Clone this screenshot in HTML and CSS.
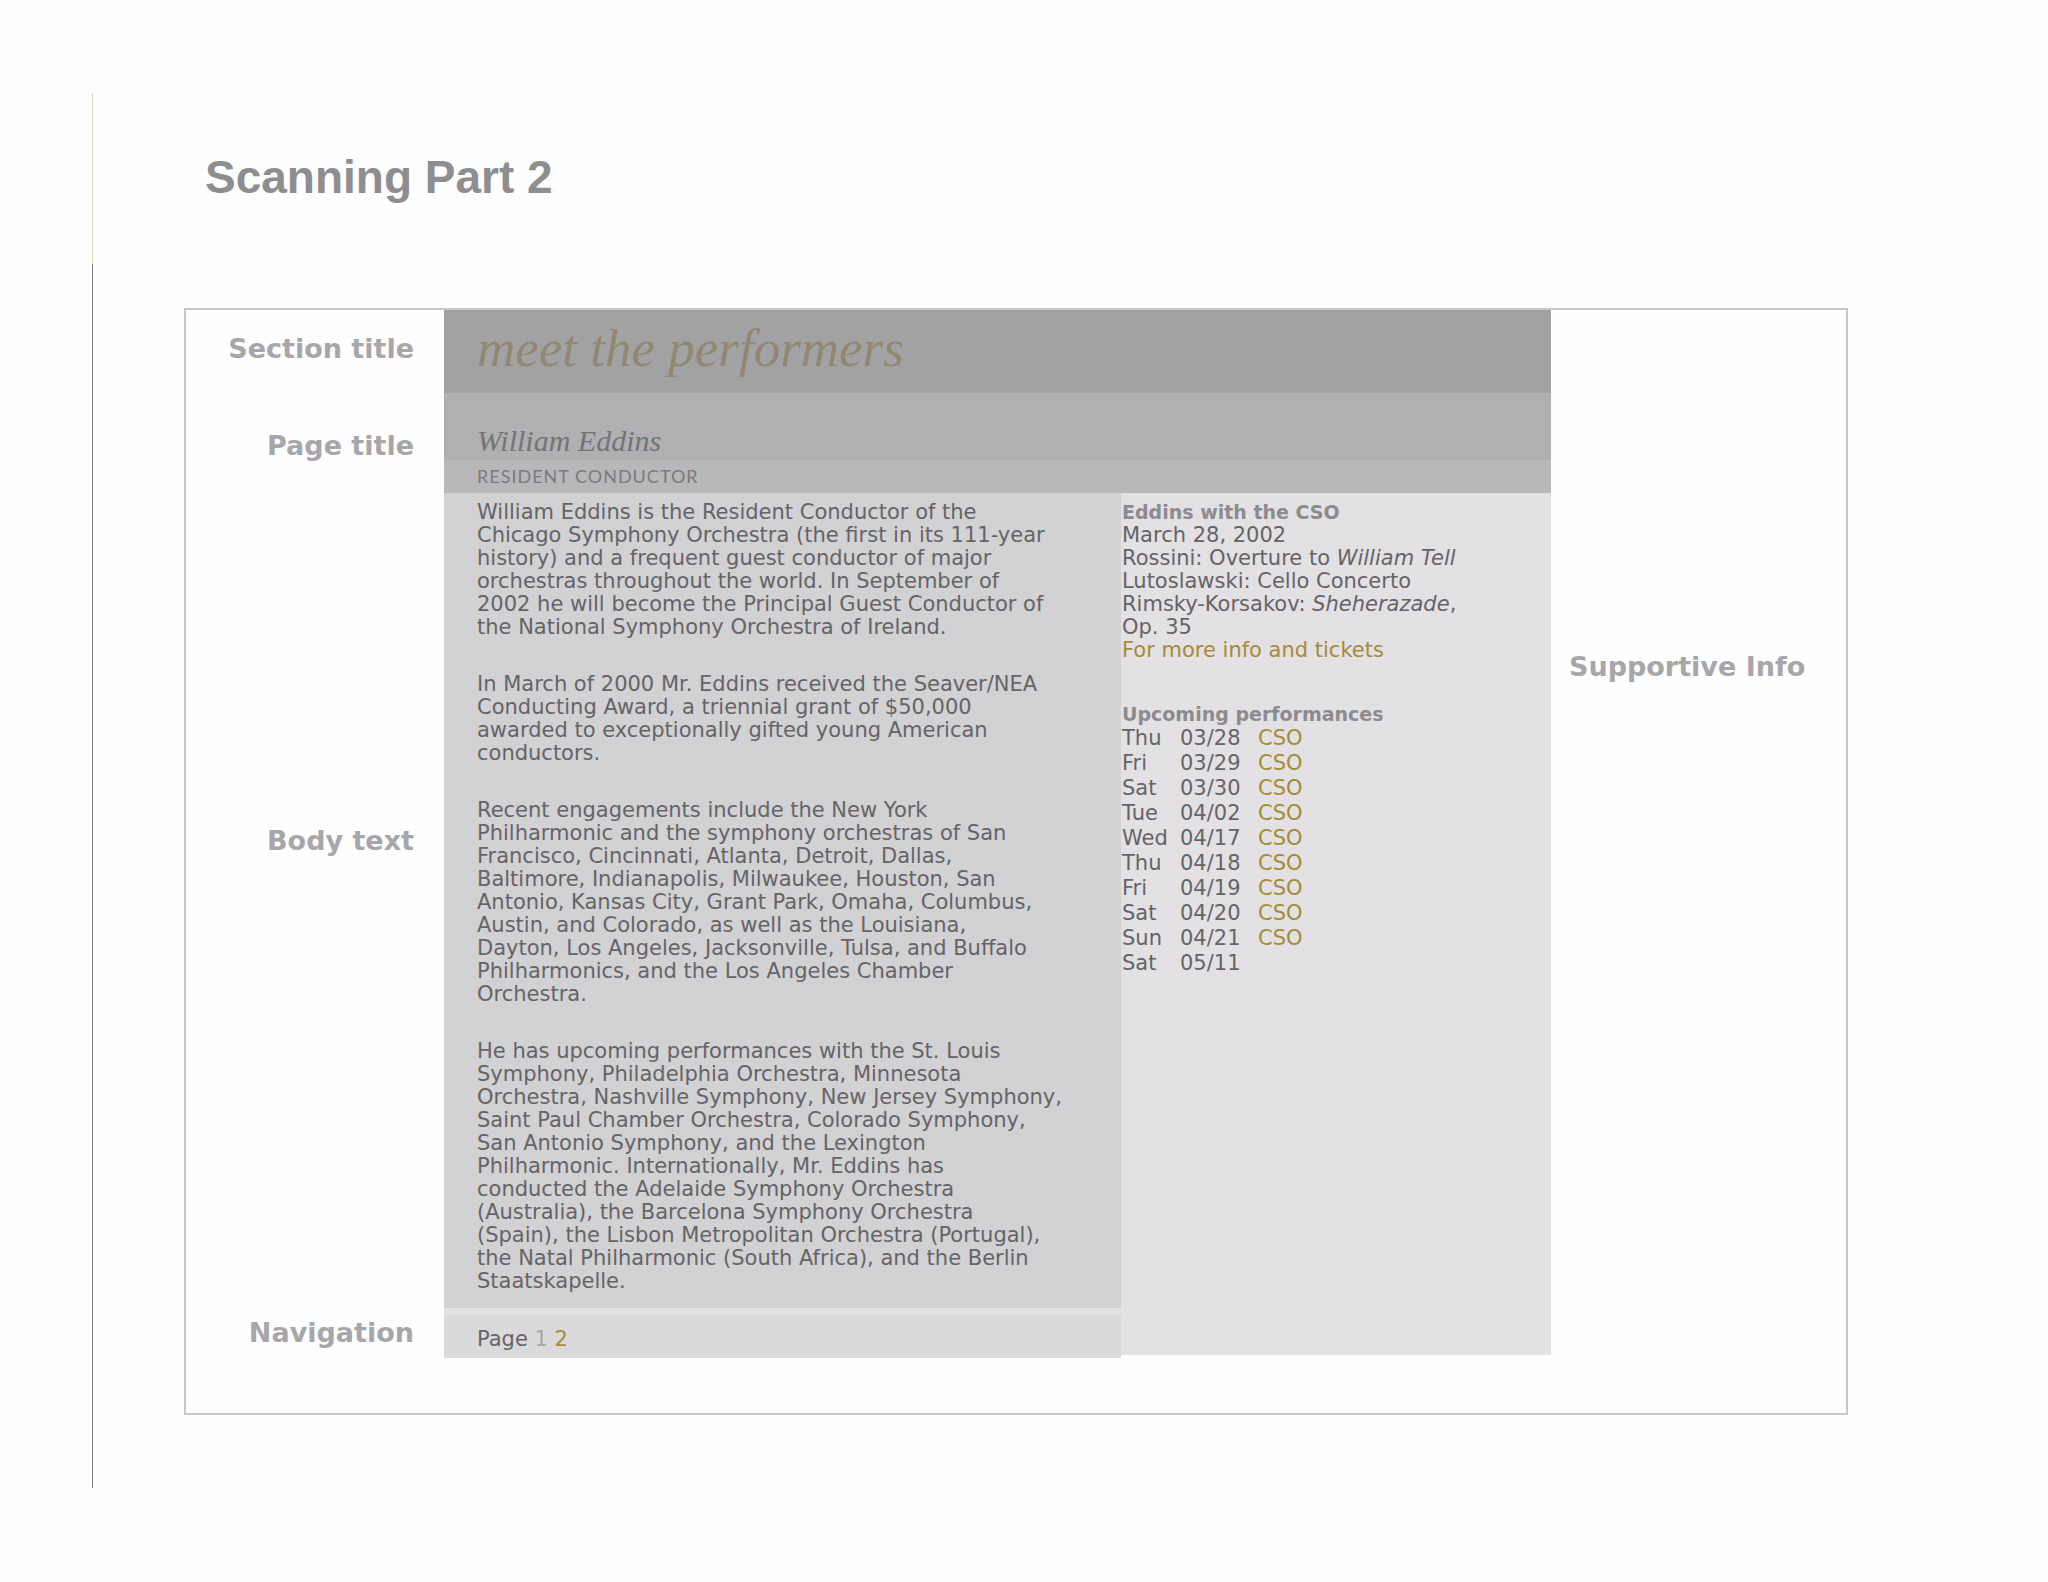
FILE: index.html
```
<!DOCTYPE html>
<html lang="en">
    <head>
        <meta charset="UTF-8">
        <title>Scanning Part 2</title>
        <link rel="stylesheet" href="styles.css">
    </head>
    <body>
        <div class="slide">
            <div class="rail">
                <div class="rail_top"></div>
                <div class="rail_bottom"></div>
            </div>
            <main class="content">
                <h1 class="title">Scanning Part 2</h1>
                <div class="frame">
                    <div class="label label_section">Section title</div>
                    <div class="section_title">meet the performers</div>

                    <div class="label label_page">Page title</div>
                    <div class="page_title">
                        <h2 class="name">William Eddins</h2>
                        <div class="role">RESIDENT CONDUCTOR</div>
                    </div>

                    <div class="label label_body">Body text</div>
                    <article class="bio">
                        <p>William Eddins is the Resident Conductor of the<br>
                        Chicago Symphony Orchestra (the first in its 111-year<br>
                        history) and a frequent guest conductor of major<br>
                        orchestras throughout the world. In September of<br>
                        2002 he will become the Principal Guest Conductor of<br>
                        the National Symphony Orchestra of Ireland.</p>
                        <p>In March of 2000 Mr. Eddins received the Seaver/NEA<br>
                        Conducting Award, a triennial grant of $50,000<br>
                        awarded to exceptionally gifted young American<br>
                        conductors.</p>
                        <p>Recent engagements include the New York<br>
                        Philharmonic and the symphony orchestras of San<br>
                        Francisco, Cincinnati, Atlanta, Detroit, Dallas,<br>
                        Baltimore, Indianapolis, Milwaukee, Houston, San<br>
                        Antonio, Kansas City, Grant Park, Omaha, Columbus,<br>
                        Austin, and Colorado, as well as the Louisiana,<br>
                        Dayton, Los Angeles, Jacksonville, Tulsa, and Buffalo<br>
                        Philharmonics, and the Los Angeles Chamber<br>
                        Orchestra.</p>
                        <p>He has upcoming performances with the St. Louis<br>
                        Symphony, Philadelphia Orchestra, Minnesota<br>
                        Orchestra, Nashville Symphony, New Jersey Symphony,<br>
                        Saint Paul Chamber Orchestra, Colorado Symphony,<br>
                        San Antonio Symphony, and the Lexington<br>
                        Philharmonic. Internationally, Mr. Eddins has<br>
                        conducted the Adelaide Symphony Orchestra<br>
                        (Australia), the Barcelona Symphony Orchestra<br>
                        (Spain), the Lisbon Metropolitan Orchestra (Portugal),<br>
                        the Natal Philharmonic (South Africa), and the Berlin<br>
                        Staatskapelle.</p>
                    </article>

                    <aside class="info">
                        <h3>Eddins with the CSO</h3>
                        <div>March 28, 2002</div>
                        <div>Rossini: Overture to <em>William Tell</em></div>
                        <div>Lutoslawski: Cello Concerto</div>
                        <div>Rimsky-Korsakov: <em>Sheherazade</em>,<br>Op. 35</div>
                        <a href="#">For more info and tickets</a>

                        <h3 class="upcoming">Upcoming performances</h3>
                        <table class="dates">
                            <tr><td>Thu</td><td>03/28</td><td><a href="#">CSO</a></td></tr>
                            <tr><td>Fri</td><td>03/29</td><td><a href="#">CSO</a></td></tr>
                            <tr><td>Sat</td><td>03/30</td><td><a href="#">CSO</a></td></tr>
                            <tr><td>Tue</td><td>04/02</td><td><a href="#">CSO</a></td></tr>
                            <tr><td>Wed</td><td>04/17</td><td><a href="#">CSO</a></td></tr>
                            <tr><td>Thu</td><td>04/18</td><td><a href="#">CSO</a></td></tr>
                            <tr><td>Fri</td><td>04/19</td><td><a href="#">CSO</a></td></tr>
                            <tr><td>Sat</td><td>04/20</td><td><a href="#">CSO</a></td></tr>
                            <tr><td>Sun</td><td>04/21</td><td><a href="#">CSO</a></td></tr>
                            <tr><td>Sat</td><td>05/11</td><td></td></tr>
                        </table>
                    </aside>
                    <div class="label label_info">Supportive Info</div>

                    <div class="label label_nav">Navigation</div>
                    <nav class="pages">Page <span class="current">1</span> <a href="#">2</a></nav>
                </div>
            </main>
        </div>
    </body>
</html>
```
FILE: styles.css
```
body{
    margin: 0;
    background-color: #fefefe;
    font-family: "DejaVu Sans", Verdana, sans-serif;
    font-size: 21px;
    line-height: 23px;
    color: #656467;
}

h1, h2, h3, p{
    margin: 0;
}

a{
    color: #a58c35;
    text-decoration: none;
}

.slide{
    display: flex;
    padding: 93px 200px 94px 92px;
}

/* thin line down the left side */
.rail{
    display: flex;
    flex-direction: column;
    width: 1px;
}

.rail_top{
    height: 171px;
    background-color: #d9d6b4;
}

.rail_bottom{
    flex: 1;
    background-color: #858587;
}

.content{
    flex: 1;
    padding: 57px 0 73px 91px;
}

.title{
    padding-left: 21px;
    font-family: "Liberation Sans", Arial, sans-serif;
    font-size: 46px;
    line-height: 54px;
    color: #8e8e90;
}

.frame{
    display: grid;
    grid-template-columns: 258fr 677fr 430fr 295fr;
    margin-top: 104px;
    padding-bottom: 55px;
    border: 2px solid #c6c7c8;
    background-color: #fefefe;
}

/* labels */
.label{
    grid-column: 1;
    padding-right: 30px;
    font-size: 27px;
    font-weight: bold;
    line-height: 32px;
    text-align: right;
    color: #a7a6a9;
}

.label_section{
    padding-top: 23px;
}

.label_page{
    padding-top: 37px;
}

.label_body{
    padding-top: 332px;
}

.label_nav{
    padding-top: 9px;
}

.label_info{
    grid-column: 4;
    padding: 158px 0 0 18px;
    text-align: left;
}

/* headings */
.section_title{
    grid-column: 2 / 4;
    padding: 8px 0 15px 33px;
    background-color: #a2a1a3;
    font-family: "Liberation Serif", "Times New Roman", serif;
    font-size: 53px;
    font-style: italic;
    line-height: 60px;
    color: #928872;
}

.page_title{
    grid-column: 2 / 4;
    background-color: #b0afb1;
}

.name{
    padding: 31px 0 2px 33px;
    font-family: "Liberation Serif", "Times New Roman", serif;
    font-size: 30px;
    font-style: italic;
    font-weight: normal;
    line-height: 34px;
    color: #747376;
}

.role{
    padding: 5px 0 5px 33px;
    background-color: #b8b7b9;
    font-family: Lato, "Gill Sans", sans-serif;
    font-size: 18px;
    letter-spacing: 1px;
    color: #7b7a7d;
}

/* body text */
.bio{
    grid-column: 2;
    padding: 8px 0 15px 33px;
    background-color: #d2d1d3;
    white-space: nowrap;
}

.bio p + p{
    margin-top: 34px;
}

.pages{
    grid-column: 2;
    padding: 13px 0 7px 33px;
    border-top: 7px solid #e2e1e3;
    background-color: #dad9db;
}

.current{
    color: #aaa9ac;
}

/* right column */
.info{
    grid-column: 3;
    grid-row: 3 / 5;
    margin-bottom: 3px;
    padding: 8px 0 0 1px;
    background-color: #e3e1e4;
}

.info h3{
    font-size: 19px;
    color: #8c8b8e;
}

.info .upcoming{
    margin-top: 41px;
}

.dates{
    border-collapse: collapse;
}

.dates td{
    height: 25px;
    padding: 0;
}

.dates td:first-child{
    width: 58px;
}

.dates td:nth-child(2){
    width: 78px;
}
```
